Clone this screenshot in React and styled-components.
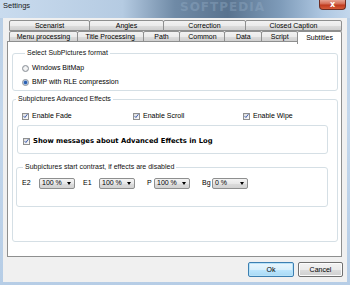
import React from "react";
import styled, { createGlobalStyle } from "styled-components";

const Global = createGlobalStyle`
  html, body { margin: 0; padding: 0; }
  body { font-family: "Liberation Sans", Arial, sans-serif; font-size: 7px; color: #000; }
`;

const Window = styled.div`
  width: 350px;
  height: 285px;
  box-sizing: border-box;
  display: flex;
  flex-direction: column;
  background: linear-gradient(180deg, #b7cde4 0%, #c3d7ec 40%, #b6cde6 100%);
  overflow: hidden;
`;

const TitleBar = styled.div`
  position: relative;
  height: 18px;
  flex: none;
  display: flex;
  align-items: flex-start;
  background: linear-gradient(90deg, #c9dbee 0%, #b5cbe2 35%, #6f8aa6 50%, #59738f 65%, #7e9bb9 80%, #aec7e1 92%, #c3d7ec 100%);
`;

const Title = styled.span`
  margin: 2px 0 0 3px;
  font-size: 7.5px;
  line-height: 8px;
  color: #1a1a1a;
`;

const Watermark = styled.span`
  position: absolute;
  left: 180px;
  top: 1px;
  font-family: "DejaVu Sans", sans-serif;
  font-weight: bold;
  font-size: 12px;
  line-height: 13px;
  letter-spacing: 1px;
  color: rgba(150, 175, 200, 0.4);
`;

const CloseButton = styled.div`
  position: absolute;
  right: 4px;
  top: 0;
  width: 27px;
  height: 10px;
  box-sizing: border-box;
  border: 1px solid #6e2d22;
  border-top: none;
  border-radius: 0 0 4px 4px;
  background: linear-gradient(180deg, #e6a595 0%, #d46a52 45%, #bf3a1f 55%, #d55a38 100%);
  color: #fff;
  font-family: "DejaVu Sans", sans-serif;
  font-weight: bold;
  font-size: 8px;
  line-height: 9px;
  text-align: center;
`;

const Body = styled.div`
  flex: 1;
  margin: 0 3px 3px 3px;
  background: #f0f0f0;
  display: flex;
  flex-direction: column;
`;

const Tabs = styled.div`
  margin: 3px 0 0 6px;
  width: 333px;
  display: flex;
  flex-direction: column;
  position: relative;
  z-index: 1;
`;

const TabRow = styled.div`
  display: flex;
  height: ${(p) => p.h}px;
  align-items: flex-end;
`;

const Tab = styled.div`
  width: ${(p) => p.w}px;
  height: ${(p) => (p.active ? 13 : 11)}px;
  box-sizing: border-box;
  border: 1px solid #8e8f8f;
  border-bottom: ${(p) => (p.active ? "none" : "1px solid #8e8f8f")};
  margin-left: -1px;
  margin-bottom: ${(p) => (p.active ? "-2px" : "0")};
  position: relative;
  z-index: ${(p) => (p.active ? 2 : 0)};
  background: ${(p) =>
    p.active ? "#fff" : "linear-gradient(180deg, #f2f2f2 0%, #ebebeb 50%, #dddddd 51%, #cfcfcf 100%)"};
  border-radius: 2px 2px 0 0;
  display: flex;
  align-items: ${(p) => (p.active ? "flex-start" : "center")};
  justify-content: center;
  padding-top: ${(p) => (p.active ? "2px" : "0")};
  font-size: 7px;
  line-height: 8px;
  white-space: nowrap;
  &:first-child { margin-left: 0; }
`;

const Panel = styled.div`
  margin: -1px 0 0 4px;
  width: 335px;
  height: 216px;
  box-sizing: border-box;
  background: #fff;
  border: 1px solid #8e8f8f;
  display: flex;
  flex-direction: column;
  padding: 7px 3px 0 4px;
`;

const Group = styled.fieldset`
  margin: ${(p) => p.m || "0"};
  padding: ${(p) => p.pad || "0"};
  border: 1px solid #d5dfe5;
  border-radius: 3px;
  min-width: 0;
`;

const Legend = styled.legend`
  margin-left: ${(p) => p.ml || 3}px;
  padding: 0 2px;
  font-size: 7px;
  line-height: 8px;
  color: #111;
`;

const Option = styled.label`
  display: flex;
  align-items: center;
  height: 14px;
  padding-left: ${(p) => p.pl || 0}px;
  font-size: ${(p) => (p.bold ? "6.8px" : "7px")};
  line-height: 8px;
  font-weight: ${(p) => (p.bold ? "bold" : "normal")};
  font-family: ${(p) => (p.bold ? '"DejaVu Sans", sans-serif' : "inherit")};
  white-space: nowrap;
`;

const Radio = styled.span`
  width: 7px;
  height: 7px;
  box-sizing: border-box;
  border-radius: 50%;
  border: 1px solid #8a8f96;
  background: ${(p) =>
    p.on
      ? "radial-gradient(circle, #2a5fb0 0 1.3px, #7ba6dc 1.8px, #eef2f6 2.6px)"
      : "radial-gradient(circle, #f4f4f4 0 1px, #dcdfe3 3px)"};
  margin-right: 3px;
  flex: none;
`;

const CheckBox = styled.span`
  width: 7px;
  height: 7px;
  box-sizing: border-box;
  border: 1px solid #8e8f8f;
  background: linear-gradient(135deg, #dcdcdc, #fdfdfd);
  margin-right: 3px;
  flex: none;
  display: flex;
  align-items: center;
  justify-content: center;
  svg { display: block; }
`;

const CheckGrid = styled.div`
  display: grid;
  grid-template-columns: 111px 110px auto;
  padding: 6px 0 0 9px;
`;

const InnerBox = styled.div`
  margin: 2px 9px 0 4px;
  padding: 8px 0 5px 5px;
  border: 1px solid #d5dfe5;
  border-radius: 3px;
`;

const ComboRow = styled.div`
  display: flex;
  align-items: center;
  height: 12px;
  padding-left: 5px;
`;

const FieldLabel = styled.span`
  width: ${(p) => p.w}px;
  margin-left: ${(p) => p.ml || 0}px;
  font-size: 7px;
  line-height: 8px;
  flex: none;
`;

const Combo = styled.div`
  width: 36px;
  height: 11px;
  box-sizing: border-box;
  border: 1px solid #8e8f8f;
  border-radius: 2px;
  background: linear-gradient(180deg, #f3f3f3 0%, #e8e8e8 50%, #dcdcdc 51%, #d2d2d2 100%);
  display: flex;
  align-items: center;
  justify-content: space-between;
  padding: 0 3px 0 2px;
  font-size: 7px;
  line-height: 8px;
  flex: none;
`;

const Arrow = styled.span`
  width: 0;
  height: 0;
  border-left: 2.5px solid transparent;
  border-right: 2.5px solid transparent;
  border-top: 3px solid #000;
`;

const ButtonBar = styled.div`
  display: flex;
  justify-content: flex-end;
  gap: 4px;
  margin-top: 5px;
  padding-right: 4px;
`;

const Button = styled.div`
  width: ${(p) => p.w}px;
  height: 15px;
  box-sizing: border-box;
  border: 1px solid ${(p) => (p.primary ? "#3c7fb1" : "#707070")};
  border-radius: 2px;
  background: ${(p) =>
    p.primary
      ? "linear-gradient(180deg, #eaf6fd 0%, #d9f0fc 50%, #bee6fd 51%, #a7d9f5 100%)"
      : "linear-gradient(180deg, #f2f2f2 0%, #ebebeb 50%, #dddddd 51%, #cfcfcf 100%)"};
  box-shadow: inset 0 0 0 1px ${(p) => (p.primary ? "#b8e2f8" : "#fcfcfc")};
  display: flex;
  align-items: center;
  justify-content: center;
  font-size: 7px;
  line-height: 8px;
`;

const Check = () => (
  <CheckBox>
    <svg width="6" height="6" viewBox="0 0 6 6">
      <path d="M0.8 3.2 L2.3 4.8 L5.3 0.8" fill="none" stroke="#2c4fa8" strokeWidth="1.1" />
    </svg>
  </CheckBox>
);

const topTabs = [
  ["Scenarist", 81],
  ["Angles", 75],
  ["Correction", 83],
  ["Closed Caption", 97],
];
const bottomTabs = [
  ["Menu processing", 69],
  ["Title Processing", 67],
  ["Path", 38],
  ["Common", 46],
  ["Data", 38],
  ["Script", 37],
  ["Subtitles", 45, true],
];

export default function App() {
  return (
    <>
      <Global />
      <Window>
        <TitleBar>
          <Title>Settings</Title>
          <Watermark>SOFTPEDIA</Watermark>
          <CloseButton>x</CloseButton>
        </TitleBar>
        <Body>
          <Tabs>
            <TabRow h={10}>
              {topTabs.map(([t, w]) => (
                <Tab key={t} w={w}>{t}</Tab>
              ))}
            </TabRow>
            <TabRow h={11}>
              {bottomTabs.map(([t, w, a]) => (
                <Tab key={t} w={w} active={a}>{t}</Tab>
              ))}
            </TabRow>
          </Tabs>
          <Panel>
            <Group pad="4px 0 1px 9px">
              <Legend>Select SubPictures format</Legend>
              <Option><Radio />Windows BitMap</Option>
              <Option><Radio on />BMP with RLE compression</Option>
            </Group>
            <Group m="4px 0 0 0" pad="0 0 34px 0">
              <Legend>Subpictures Advanced Effects</Legend>
              <CheckGrid>
                <Option><Check />Enable Fade</Option>
                <Option><Check />Enable Scroll</Option>
                <Option><Check />Enable Wipe</Option>
              </CheckGrid>
              <InnerBox>
                <Option bold><Check />Show messages about Advanced Effects in Log</Option>
              </InnerBox>
              <Group m="9px 9px 0 3px" pad="6px 0 17px 0">
                <Legend ml={6}>Subpictures start contrast, if effects are disabled</Legend>
                <ComboRow>
                  <FieldLabel w={17}>E2</FieldLabel>
                  <Combo>100 %<Arrow /></Combo>
                  <FieldLabel w={16} ml={8}>E1</FieldLabel>
                  <Combo>100 %<Arrow /></Combo>
                  <FieldLabel w={7} ml={12}>P</FieldLabel>
                  <Combo>100 %<Arrow /></Combo>
                  <FieldLabel w={10} ml={12}>Bg</FieldLabel>
                  <Combo>0 %<Arrow /></Combo>
                </ComboRow>
              </Group>
            </Group>
          </Panel>
          <ButtonBar>
            <Button w={46} primary>Ok</Button>
            <Button w={45}>Cancel</Button>
          </ButtonBar>
        </Body>
      </Window>
    </>
  );
}
